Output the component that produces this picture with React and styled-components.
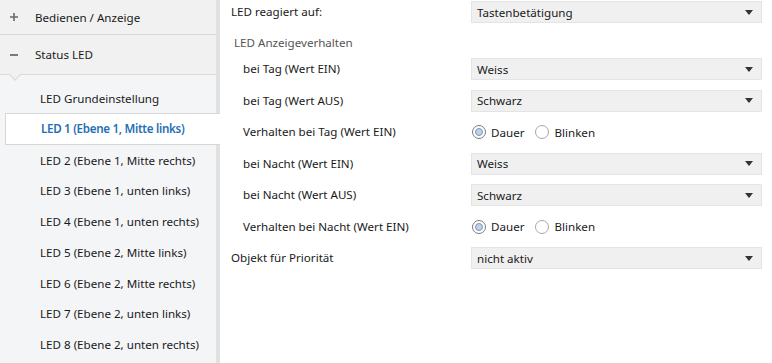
import styled, { createGlobalStyle } from "styled-components";

const GlobalStyle = createGlobalStyle`
  html, body {
    margin: 0;
    padding: 0;
    background: #ffffff;
  }
  body {
    font-family: "Noto Sans", "Open Sans", sans-serif;
    font-size: 11.6px;
    color: #1a1a1a;
  }
`;

const Layout = styled.div`
  display: flex;
  height: 363px;
  overflow: hidden;
`;

const Sidebar = styled.div`
  width: 216px;
  flex-shrink: 0;
  background: #f4f5f7;
  border-right: 4px solid #e1e1e1;
  display: flex;
  flex-direction: column;
`;

const GroupHeader = styled.div`
  position: relative;
  height: ${({ h }) => h}px;
  display: flex;
  align-items: center;
  background: #f1f1f1;
  border-bottom: 1px solid #dadada;
  flex-shrink: 0;
  ${({ notch }) =>
    notch &&
    `
    &:after {
      content: "";
      position: absolute;
      left: 11px;
      bottom: -5px;
      width: 7px;
      height: 7px;
      background: #f1f1f1;
      border-right: 1px solid #dadada;
      border-bottom: 1px solid #dadada;
      transform: rotate(45deg);
    }
  `}
`;

const Toggle = styled.span`
  width: 25px;
  padding-left: 10px;
  display: flex;
  align-items: center;
  svg {
    display: block;
  }
`;

const SubList = styled.div`
  display: flex;
  flex-direction: column;
  padding-top: 8px;
`;

const SubItem = styled.div`
  height: 30.75px;
  display: flex;
  align-items: center;
  padding-left: 40px;
  white-space: nowrap;
  box-sizing: border-box;
  ${({ active }) =>
    active &&
    `
    position: relative;
    margin-left: 5px;
    margin-right: -4px;
    padding-left: 35px;
    background: #ffffff;
    border: 1px solid #d6d6d6;
    border-right: none;
    color: #1f6fb5;
    font-weight: 600;
    letter-spacing: -0.3px;
    height: 32px;
    margin-top: -1px;
  `}
`;

const Content = styled.div`
  flex: 1;
  padding: 0 10px 0 11px;
  display: flex;
  flex-direction: column;
`;

const Row = styled.div`
  height: ${({ h }) => h}px;
  display: grid;
  grid-template-columns: 240px 1fr;
  align-items: ${({ bottom }) => (bottom ? "end" : "center")};
  padding-bottom: ${({ bottom }) => (bottom ? "2px" : "0")};
  box-sizing: border-box;
`;

const Label = styled.div`
  padding-left: ${({ indent }) => indent}px;
  color: ${({ muted }) => (muted ? "#555555" : "#1a1a1a")};
  white-space: nowrap;
  line-height: 16px;
`;

const Select = styled.div`
  height: 22px;
  box-sizing: border-box;
  background: #f0f0f0;
  border: 1px solid #e4e4e4;
  display: flex;
  align-items: center;
  justify-content: space-between;
  padding: 0 8px 0 5px;
`;

const Arrow = styled.span`
  width: 0;
  height: 0;
  border-left: 4px solid transparent;
  border-right: 4px solid transparent;
  border-top: 5px solid #333333;
`;

const RadioGroup = styled.div`
  display: flex;
  align-items: center;
  gap: 11px;
  padding-left: 1px;
`;

const RadioOption = styled.label`
  display: flex;
  align-items: center;
  gap: 5px;
`;

const Circle = styled.span`
  width: 14px;
  height: 14px;
  box-sizing: border-box;
  border-radius: 50%;
  border: 1px solid ${({ checked }) => (checked ? "#7c7c7c" : "#a8a8a8")};
  background: #ffffff;
  display: flex;
  align-items: center;
  justify-content: center;
  &:after {
    content: "";
    display: ${({ checked }) => (checked ? "block" : "none")};
    width: 8px;
    height: 8px;
    box-sizing: border-box;
    border-radius: 50%;
    background: #c2d1e3;
    border: 1px solid #7896b8;
  }
`;

const PlusIcon = () => (
  <svg width="8" height="8" viewBox="0 0 8 8">
    <path d="M4 0v8M0 4h8" stroke="#6b6b6b" strokeWidth="1.6" />
  </svg>
);

const MinusIcon = () => (
  <svg width="8" height="8" viewBox="0 0 8 8">
    <path d="M0 4h8" stroke="#6b6b6b" strokeWidth="1.8" />
  </svg>
);

const Dropdown = ({ value }) => (
  <Select>
    <span>{value}</span>
    <Arrow />
  </Select>
);

const Radios = ({ value }) => (
  <RadioGroup>
    {["Dauer", "Blinken"].map((o) => (
      <RadioOption key={o}>
        <Circle checked={o === value} />
        {o}
      </RadioOption>
    ))}
  </RadioGroup>
);

const subItems = [
  "LED Grundeinstellung",
  "LED 1 (Ebene 1, Mitte links)",
  "LED 2 (Ebene 1, Mitte rechts)",
  "LED 3 (Ebene 1, unten links)",
  "LED 4 (Ebene 1, unten rechts)",
  "LED 5 (Ebene 2, Mitte links)",
  "LED 6 (Ebene 2, Mitte rechts)",
  "LED 7 (Ebene 2, unten links)",
  "LED 8 (Ebene 2, unten rechts)",
];

export default function App() {
  return (
    <>
      <GlobalStyle />
      <Layout>
        <Sidebar>
          <GroupHeader h={34}>
            <Toggle>
              <PlusIcon />
            </Toggle>
            Bedienen / Anzeige
          </GroupHeader>
          <GroupHeader h={39} notch>
            <Toggle>
              <MinusIcon />
            </Toggle>
            Status LED
          </GroupHeader>
          <SubList>
            {subItems.map((s, i) => (
              <SubItem key={s} active={i === 1}>
                {s}
              </SubItem>
            ))}
          </SubList>
        </Sidebar>
        <Content>
          <Row h={24}>
            <Label indent={0}>LED reagiert auf:</Label>
            <Dropdown value="Tastenbetätigung" />
          </Row>
          <Row h={29.25} bottom>
            <Label indent={3} muted>
              LED Anzeigeverhalten
            </Label>
          </Row>
          <Row h={31.5}>
            <Label indent={12}>bei Tag (Wert EIN)</Label>
            <Dropdown value="Weiss" />
          </Row>
          <Row h={31.5}>
            <Label indent={12}>bei Tag (Wert AUS)</Label>
            <Dropdown value="Schwarz" />
          </Row>
          <Row h={31.5}>
            <Label indent={12}>Verhalten bei Tag (Wert EIN)</Label>
            <Radios value="Dauer" />
          </Row>
          <Row h={31.5}>
            <Label indent={12}>bei Nacht (Wert EIN)</Label>
            <Dropdown value="Weiss" />
          </Row>
          <Row h={31.5}>
            <Label indent={12}>bei Nacht (Wert AUS)</Label>
            <Dropdown value="Schwarz" />
          </Row>
          <Row h={31.5}>
            <Label indent={12}>Verhalten bei Nacht (Wert EIN)</Label>
            <Radios value="Dauer" />
          </Row>
          <Row h={31.5}>
            <Label indent={0}>Objekt für Priorität</Label>
            <Dropdown value="nicht aktiv" />
          </Row>
        </Content>
      </Layout>
    </>
  );
}
